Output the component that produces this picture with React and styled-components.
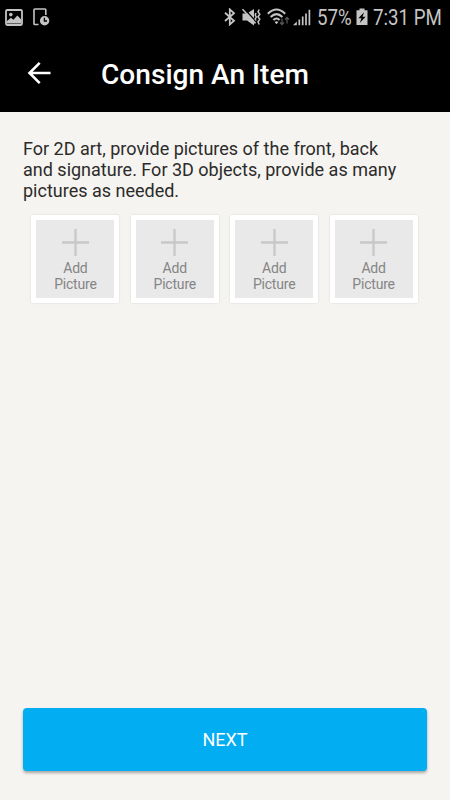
import React from 'react';
import styled, { createGlobalStyle } from 'styled-components';

const slots = [1, 2, 3, 4];

const ImageIcon = () => (
  <svg width="18" height="17" viewBox="0 0 18 17">
    <rect x="1" y="1" width="16" height="15" rx="1.2" fill="none" stroke="#c4c4c4" strokeWidth="1.8" />
    <circle cx="5.8" cy="5.6" r="1.8" fill="#c4c4c4" />
    <path d="M2 14.5V12L6 8.8L8.4 10.8L12.4 6.4L16 10.2V14.5Z" fill="#c4c4c4" />
  </svg>
);

const DeviceClockIcon = () => (
  <svg width="17" height="18" viewBox="0 0 17 18">
    <path d="M12.8 7V1.8Q12.8 1 12 1H1.8Q1 1 1 1.8V15.7Q1 16.5 1.8 16.5H5.5" fill="none" stroke="#c4c4c4" strokeWidth="1.6" />
    <circle cx="11.6" cy="12.7" r="4.7" fill="#c4c4c4" />
    <path d="M11.4 9.8V13H14" fill="none" stroke="#000" strokeWidth="1.3" />
  </svg>
);

const BluetoothIcon = () => (
  <svg width="12" height="18" viewBox="0 0 12 18">
    <path d="M1 4.8L10 12.7L5.8 16.4V1.4L10 5.2L1 13" fill="none" stroke="#c4c4c4" strokeWidth="1.8" />
  </svg>
);

const MuteIcon = () => (
  <svg width="19" height="19" viewBox="0 0 19 19">
    <path d="M0.5 5.5H5L12 1V17.5L5 12.5H0.5Z" fill="#c4c4c4" />
    <path d="M2 0.5L14.5 14" stroke="#000" strokeWidth="1.3" />
    <path d="M0.5 1.2L13.5 15.4" stroke="#c4c4c4" strokeWidth="1.6" />
    <path d="M14 5L13.2 7L14.3 9L13.2 11L14 12.5M17.2 1.5L16 3.8L17.8 6.3L16 8.8L17.8 11.3L16 13.8L17.2 16.5" fill="none" stroke="#c4c4c4" strokeWidth="1.5" />
  </svg>
);

const WifiIcon = () => (
  <svg width="23" height="18" viewBox="0 0 23 18">
    <path d="M0.8 5.8Q9.5 -2.8 18.2 5.8M3.6 9Q9.5 3.2 15.4 9M6.4 12Q9.5 8.8 12.6 12" fill="none" stroke="#c4c4c4" strokeWidth="2" />
    <path d="M7.6 14Q9.5 12.4 11.4 14L9.5 16.2Z" fill="#c4c4c4" />
    <path d="M15 10.5V16.5M13 14.5L15 16.5L17 14.5M20 15.5V9.5M18 11.5L20 9.5L22 11.5" fill="none" stroke="#555" strokeWidth="1.3" />
  </svg>
);

const SignalIcon = () => (
  <svg width="18" height="17" viewBox="0 0 18 17">
    <path d="M0 16.3L3.8 12.5V16.3Z" fill="#c4c4c4" />
    <path d="M6.3 16.3V10.5M9.7 16.3V7.5M13 16.3V4.5M16.4 16.3V0.8" stroke="#c4c4c4" strokeWidth="1.7" />
  </svg>
);

const BatteryIcon = () => (
  <svg width="12" height="18" viewBox="0 0 12 18">
    <path d="M3.5 0.5H8.5V2.2H11.5V17H0.5V2.2H3.5Z" fill="#c4c4c4" />
    <path d="M8 4.3L2.4 10.2H5.4L3.8 15L9.6 8.8H6.6Z" fill="#000" />
  </svg>
);

const BackIcon = () => (
  <svg width="24" height="24" viewBox="0 0 24 24">
    <path d="M23.5 12H2.5M12.7 1.8L2.5 12L12.7 22.2" fill="none" stroke="#fff" strokeWidth="2.6" />
  </svg>
);

const PlusIcon = () => (
  <svg width="27" height="27" viewBox="0 0 27 27">
    <path d="M13.5 0V27M0 13.5H27" stroke="#c8c8c8" strokeWidth="2.3" />
  </svg>
);

const App = () => (
  <>
    <GlobalStyle />
    <Screen>
      <StatusBar>
        <Notifications>
          <ImageIcon />
          <DeviceClockIcon />
        </Notifications>
        <SystemIcons>
          <BluetoothIcon />
          <MuteIcon />
          <WifiIcon />
          <SignalIcon />
        </SystemIcons>
        <StatusText $width={35}>57%</StatusText>
        <BatteryIcon />
        <StatusText $width={69}>7:31 PM</StatusText>
      </StatusBar>
      <Header>
        <BackButton aria-label="Back">
          <BackIcon />
        </BackButton>
        <Title>Consign An Item</Title>
      </Header>
      <Content>
        <Instructions>
          For 2D art, provide pictures of the front, back
          <br />
          and signature. For 3D objects, provide as many
          <br />
          pictures as needed.
        </Instructions>
        <PictureRow>
          {slots.map((slot) => (
            <PictureCard key={slot}>
              <PictureSlot>
                <PlusIcon />
                <SlotLabel>
                  Add
                  <br />
                  Picture
                </SlotLabel>
              </PictureSlot>
            </PictureCard>
          ))}
        </PictureRow>
        <NextButton>NEXT</NextButton>
      </Content>
    </Screen>
  </>
);

export default App;

const GlobalStyle = createGlobalStyle`
  * {
    box-sizing: border-box;
  }

  body {
    margin: 0;
    background: #f6f4f0;
    font-family: Roboto, sans-serif;
  }

  svg {
    display: block;
    flex: none;
  }
`;

const Screen = styled.div`
  display: flex;
  flex-direction: column;
  width: 450px;
  height: 800px;
  overflow: hidden;
  background: #f6f4f0;
`;

const StatusBar = styled.div`
  display: flex;
  align-items: center;
  height: 35px;
  padding: 0 8px 1px 5px;
  background: #000;
`;

const Notifications = styled.div`
  display: flex;
  align-items: center;
  gap: 10px;
  margin-right: auto;
`;

const SystemIcons = styled.div`
  display: flex;
  align-items: center;
  gap: 6px;
  margin-right: 6px;

  svg:last-child {
    margin-left: -3px;
  }
`;

const StatusText = styled.span`
  width: ${(props) => props.$width}px;
  margin-right: 4px;
  padding-top: 1px;
  color: #c4c4c4;
  font-size: 21.5px;
  line-height: 34px;
  white-space: nowrap;
  transform: scaleX(0.87);
  transform-origin: left center;

  &:last-child {
    margin: 0 0 0 5px;
  }
`;

const Header = styled.header`
  display: flex;
  align-items: center;
  height: 77px;
  padding: 0 0 1px 27px;
  background: #000;
`;

const BackButton = styled.button`
  padding: 0;
  border: none;
  background: none;
`;

const Title = styled.h1`
  margin: 2px 0 0 50px;
  color: #fff;
  font-size: 28.1px;
  font-weight: 500;
  white-space: nowrap;
`;

const Content = styled.main`
  display: flex;
  flex: 1;
  flex-direction: column;
  padding: 26px 23px 29px;
`;

const Instructions = styled.p`
  margin: 0;
  color: #2b2b2b;
  font-size: 18px;
  line-height: 21.2px;
  white-space: nowrap;
`;

const PictureRow = styled.div`
  display: flex;
  gap: 11.4px;
  margin: 13.4px 0 0 8.4px;
`;

const PictureCard = styled.div`
  width: 88px;
  height: 88px;
  padding: 5px;
  border-radius: 1px;
  background: #fff;
  box-shadow: 0 0 2px rgba(0, 0, 0, 0.15);
`;

const PictureSlot = styled.div`
  display: flex;
  flex-direction: column;
  align-items: center;
  height: 78px;
  padding-top: 8.5px;
  background: #e9e9e9;
`;

const SlotLabel = styled.span`
  margin-top: 4.5px;
  color: #858585;
  font-size: 14px;
  line-height: 16px;
  letter-spacing: -0.2px;
  text-align: center;
`;

const NextButton = styled.button`
  height: 63px;
  margin-top: auto;
  border: none;
  border-radius: 4px;
  background: #02adf2;
  box-shadow: 0 2px 3px rgba(0, 0, 0, 0.32);
  color: #fff;
  font-family: inherit;
  font-size: 18px;
`;
